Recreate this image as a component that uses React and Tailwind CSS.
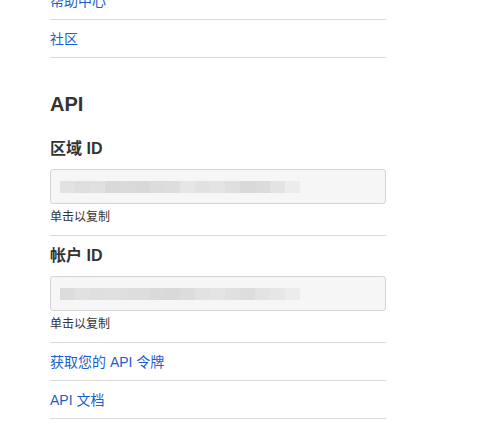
const font = { fontFamily: '"Liberation Sans", "Noto Sans CJK SC", sans-serif' };

const firstShades = [
  "#e2e2e2", "#dedede", "#e0e0e0", "#d9d9d9", "#dadada", "#d8d8d8", "#dcdcdc", "#dddddd",
  "#e6e6e6", "#e1e1e1", "#e4e4e4", "#dfdfdf", "#d9d9d9", "#dbdbdb", "#e3e3e3", "#ececec",
];
const secondShades = [
  "#dcdcdc", "#e1e1e1", "#dfdfdf", "#e0e0e0", "#dedede", "#dddddd", "#dadada", "#d9d9d9",
  "#dcdcdc", "#e2e2e2", "#e4e4e4", "#e0e0e0", "#dddddd", "#e3e3e3", "#e6e6e6", "#ececec",
];

function LinkRow({ children, className = "" }) {
  return (
    <div className={"border-b border-[#dadada] pt-[9px] pb-[8px] text-[14px] leading-[20px] " + className}>
      <a href="#" className="text-[#1a5fcf]">{children}</a>
    </div>
  );
}

function CopyField({ label, shades }) {
  return (
    <div className="border-b border-[#dadada] pb-[10px]">
      <h3 className="mt-[8px] text-[16px] font-bold leading-[24px] text-[#333]">{label}</h3>
      <div className="mt-[8px] flex h-[35px] items-center rounded-[3px] border border-[#d4d4d4] bg-[#f6f6f6] px-[9px]">
        <div className="flex h-[12px]">
          {shades.map((c, i) => (
            <div key={i} className="h-full w-[15px]" style={{ backgroundColor: c }} />
          ))}
        </div>
      </div>
      <p className="mt-[5px] text-[12px] leading-[16px] text-[#333]">单击以复制</p>
    </div>
  );
}

export default function App() {
  return (
    <div className="h-[446px] w-[479px] overflow-hidden bg-white" style={font}>
      <div className="ml-[50px] w-[336px]">
        <LinkRow className="-mt-[18px]">帮助中心</LinkRow>
        <LinkRow>社区</LinkRow>

        <h2 className="mt-[32px] text-[20px] font-bold leading-[28px] text-[#333]">API</h2>
        <div className="mt-[19px]">
          <CopyField label="区域 ID" shades={firstShades} />
        </div>
        <CopyField label="帐户 ID" shades={secondShades} />

        <LinkRow>获取您的 API 令牌</LinkRow>
        <LinkRow>API 文档</LinkRow>
      </div>
    </div>
  );
}
